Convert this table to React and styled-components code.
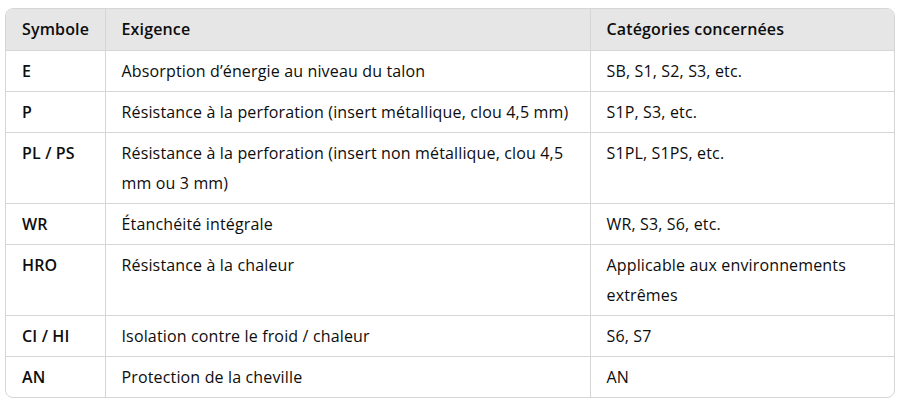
import React from 'react'
import styled, { createGlobalStyle } from 'styled-components'

const GlobalStyle = createGlobalStyle`
  html, body {
    margin: 0;
    padding: 0;
    background: #ffffff;
  }
  body {
    font-family: 'Open Sans', 'Noto Sans', sans-serif;
    color: #0d0d0d;
  }
`

const Page = styled.div`
  padding: 8px 8px 0 5px;
`

const Frame = styled.div`
  width: 888px;
  border: 1px solid #d6d6d6;
  border-radius: 8px;
  overflow: hidden;
`

const Table = styled.table`
  width: 100%;
  border-collapse: collapse;
  table-layout: fixed;
  font-size: 16px;
  letter-spacing: 0.15px;
  line-height: 30px;
`

const HeadCell = styled.th`
  background: #e6e6e6;
  text-align: left;
  font-weight: 600;
  padding: 5px 16px 6px;
  border-bottom: 1px solid #d6d6d6;
  border-left: ${(p) => (p.$first ? 'none' : '1px solid #d6d6d6')};
`

const Row = styled.tr`
  &:not(:last-child) td {
    border-bottom: 1px solid #d6d6d6;
  }
`

const Cell = styled.td`
  vertical-align: top;
  padding: 5px 16px 5px;
  font-weight: ${(p) => (p.$bold ? 600 : 400)};
  border-left: ${(p) => (p.$first ? 'none' : '1px solid #d6d6d6')};
`

const rows = [
  ['E', 'Absorption d’énergie au niveau du talon', 'SB, S1, S2, S3, etc.'],
  ['P', 'Résistance à la perforation (insert métallique, clou 4,5 mm)', 'S1P, S3, etc.'],
  ['PL / PS', 'Résistance à la perforation (insert non métallique, clou 4,5 mm ou 3 mm)', 'S1PL, S1PS, etc.'],
  ['WR', 'Étanchéité intégrale', 'WR, S3, S6, etc.'],
  ['HRO', 'Résistance à la chaleur', 'Applicable aux environnements extrêmes'],
  ['CI / HI', 'Isolation contre le froid / chaleur', 'S6, S7'],
  ['AN', 'Protection de la cheville', 'AN'],
]

export default function App() {
  return (
    <Page>
      <GlobalStyle />
      <Frame>
        <Table>
          <colgroup>
            <col style={{ width: 99 }} />
            <col style={{ width: 485 }} />
            <col />
          </colgroup>
          <thead>
            <tr>
              <HeadCell $first>Symbole</HeadCell>
              <HeadCell>Exigence</HeadCell>
              <HeadCell>Catégories concernées</HeadCell>
            </tr>
          </thead>
          <tbody>
            {rows.map(([sym, req, cat]) => (
              <Row key={sym}>
                <Cell $first $bold>{sym}</Cell>
                <Cell>{req}</Cell>
                <Cell>{cat}</Cell>
              </Row>
            ))}
          </tbody>
        </Table>
      </Frame>
    </Page>
  )
}
